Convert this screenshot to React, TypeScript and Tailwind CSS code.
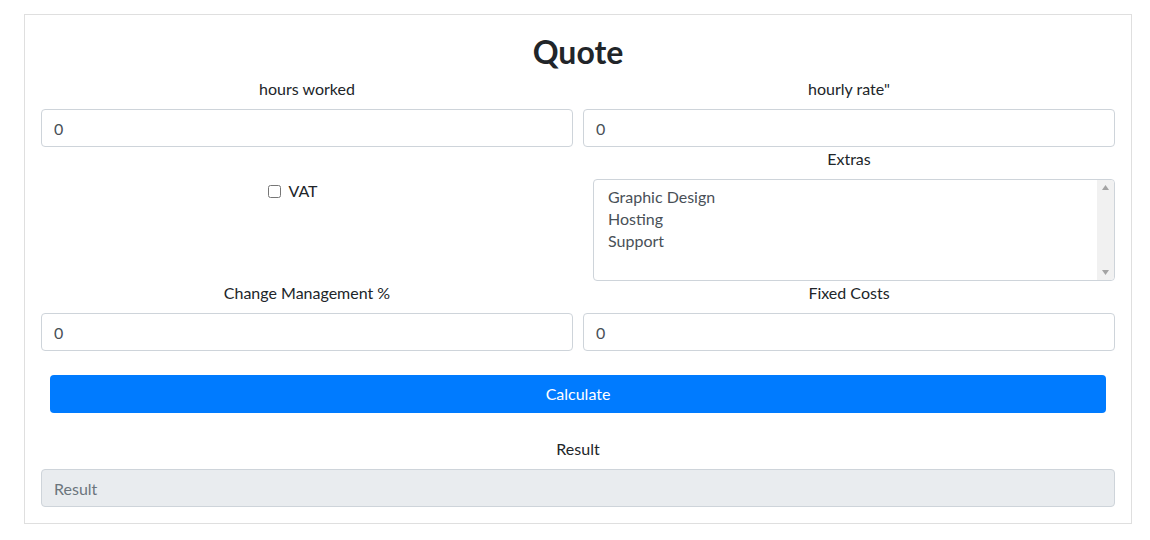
import React from "react";

const inputCls =
  "block h-[38px] w-full rounded-[4px] border border-[#ced4da] px-3 text-[16px] text-[#495057] outline-none";

function Label({ children }: { children: React.ReactNode }): React.ReactElement {
  return (
    <div className="h-[24px] text-center text-[16px] leading-[24px] text-[#212529]">
      {children}
    </div>
  );
}

function Field({ label }: { label: string }): React.ReactElement {
  return (
    <div>
      <Label>{label}</Label>
      <input className={`${inputCls} mt-2 bg-white`} defaultValue="0" />
    </div>
  );
}

function FakeScrollbar(): React.ReactElement {
  return (
    <div className="flex w-[17px] flex-col items-center justify-between rounded-r-[4px] bg-[#f1f1f1] py-[5px]">
      <svg width="7" height="5" viewBox="0 0 7 5">
        <path d="M3.5 0 L7 5 L0 5 Z" fill="#a3a3a3" />
      </svg>
      <svg width="7" height="5" viewBox="0 0 7 5">
        <path d="M0 0 L7 0 L3.5 5 Z" fill="#a3a3a3" />
      </svg>
    </div>
  );
}

export default function App(): React.ReactElement {
  const extras = ["Graphic Design", "Hosting", "Support"];

  return (
    <div
      className="bg-white px-[24px] pt-[14px]"
      style={{ fontFamily: "Lato, 'Noto Sans', sans-serif" }}
    >
      <div className="h-[510px] w-[1108px] border border-[#dfdfdf] px-[16px] pt-[18px]">
        <h1 className="h-[44px] text-center text-[32px] font-bold leading-[38px] text-[#212529]">
          Quote
        </h1>

        <div className="grid grid-cols-2 gap-x-[10px]">
          <Field label="hours worked" />
          <Field label="hourly rate&quot;" />

          <div className="flex justify-center pr-[28px] pt-[32px]">
            <label className="flex h-[24px] items-center gap-[7px] text-[16px] text-[#212529]">
              <input
                type="checkbox"
                className="h-[13px] w-[13px] accent-[#007bff]"
              />
              VAT
            </label>
          </div>

          <div>
            <Label>Extras</Label>
            <div className="ml-[10px] mt-2 flex h-[102px] rounded-[4px] border border-[#ced4da] bg-white">
              <ul className="flex-1 px-[14px] pt-[6px] text-[16px] leading-[22px] text-[#495057]">
                {extras.map((item) => (
                  <li key={item}>{item}</li>
                ))}
              </ul>
              <FakeScrollbar />
            </div>
          </div>

          <Field label="Change Management %" />
          <Field label="Fixed Costs" />
        </div>

        <div className="px-[9px] pt-[24px]">
          <button className="h-[38px] w-full rounded-[4px] bg-[#007bff] text-[16px] text-white">
            Calculate
          </button>
        </div>

        <div className="pt-[24px]">
          <Label>Result</Label>
          <input
            className={`${inputCls} mt-2 bg-[#e9ecef] placeholder:text-[#6c757d]`}
            placeholder="Result"
            disabled
          />
        </div>
      </div>
    </div>
  );
}
